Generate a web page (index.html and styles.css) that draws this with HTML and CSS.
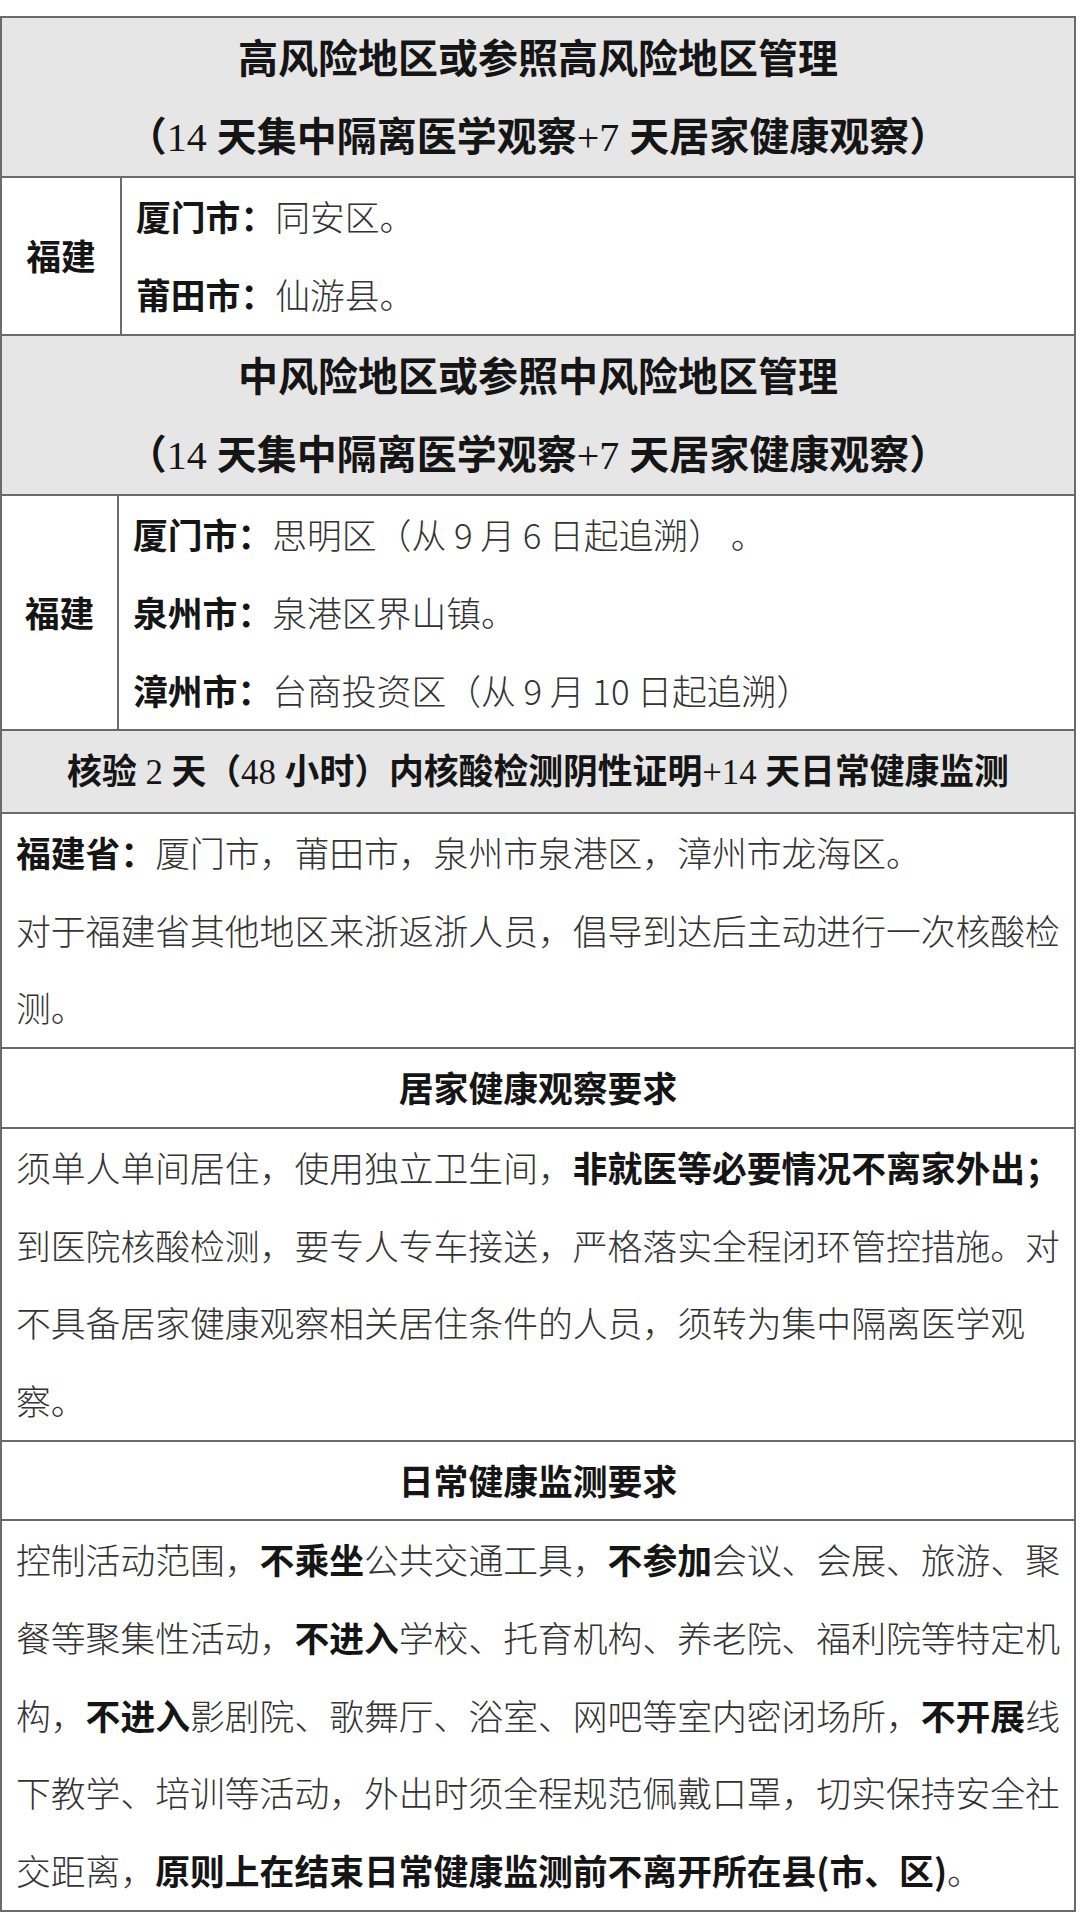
FILE: index.html
```html
<!DOCTYPE html>
<html lang="zh-CN">
<head>
<meta charset="utf-8">
<title>福建来浙返浙人员管控要求</title>
<link rel="stylesheet" href="styles.css">
</head>
<body>
<div class="sheet">
  <div class="row head grey">
    <div>高风险地区或参照高风险地区管理</div>
    <div>（<span class="num">14 </span>天集中隔离医学观察<span class="num">+7 </span>天居家健康观察）</div>
  </div>
  <div class="row region r1">
    <div class="prov">福建</div>
    <div class="cities">
      <div><b>厦门市：</b>同安区。</div>
      <div><b>莆田市：</b>仙游县。</div>
    </div>
  </div>
  <div class="row head grey">
    <div>中风险地区或参照中风险地区管理</div>
    <div>（<span class="num">14 </span>天集中隔离医学观察<span class="num">+7 </span>天居家健康观察）</div>
  </div>
  <div class="row region r2">
    <div class="prov">福建</div>
    <div class="cities">
      <div><b>厦门市：</b>思明区（从 9 月 6 日起追溯） 。</div>
      <div><b>泉州市：</b>泉港区界山镇。</div>
      <div><b>漳州市：</b>台商投资区（从 9 月 10 日起追溯）</div>
    </div>
  </div>
  <div class="row head small grey">
    <div>核验<span class="num"> 2 </span>天（<span class="num">48 </span>小时）内核酸检测阴性证明<span class="num">+14 </span>天日常健康监测</div>
  </div>
  <div class="row note">
    <div><b>福建省：</b>厦门市，莆田市，泉州市泉港区，漳州市龙海区。</div>
    <div>对于福建省其他地区来浙返浙人员，倡导到达后主动进行一次核酸检<br>测。</div>
  </div>
  <div class="row head small">
    <div>居家健康观察要求</div>
  </div>
  <div class="row note">
    <div>须单人单间居住，使用独立卫生间，<b>非就医等必要情况不离家外出；</b><br>到医院核酸检测，要专人专车接送，严格落实全程闭环管控措施。对<br>不具备居家健康观察相关居住条件的人员，须转为集中隔离医学观<br>察。</div>
  </div>
  <div class="row head small">
    <div>日常健康监测要求</div>
  </div>
  <div class="row note">
    <div>控制活动范围，<b>不乘坐</b>公共交通工具，<b>不参加</b>会议、会展、旅游、聚<br>餐等聚集性活动，<b>不进入</b>学校、托育机构、养老院、福利院等特定机<br>构，<b>不进入</b>影剧院、歌舞厅、浴室、网吧等室内密闭场所，<b>不开展</b>线<br>下教学、培训等活动，外出时须全程规范佩戴口罩，切实保持安全社<br>交距离，<b>原则上在结束日常健康监测前不离开所在县(市、区)</b>。</div>
  </div>
</div>
</body>
</html>
```
FILE: styles.css
```css
html, body {
  margin: 0;
  padding: 0;
  background: #ffffff;
}

body {
  padding-top: 16px;
  font-family: "Noto Sans CJK SC", "Noto Sans", sans-serif;
  color: #333333;
}

.sheet {
  width: 1076px;
  box-sizing: border-box;
  border: 2px solid #6a6a6a;
}

.row + .row {
  border-top: 2px solid #6a6a6a;
}

.head {
  text-align: center;
  font-weight: 700;
  color: #151515;
  font-size: 40px;
  line-height: 77.7px;
}

.head.small {
  font-size: 34.8px;
}

.grey {
  background: #e6e6e6;
}

.num {
  font-family: "Liberation Serif", serif;
  font-weight: 400;
}

.region {
  display: flex;
  font-size: 34.8px;
  line-height: 77.7px;
}

.prov {
  display: flex;
  align-items: center;
  justify-content: center;
  font-weight: 700;
  color: #151515;
  border-right: 2px solid #6a6a6a;
  box-sizing: border-box;
}

.r1 .prov {
  width: 120px;
}

.r2 .prov {
  width: 117px;
}

.cities {
  padding-left: 14px;
  font-weight: 300;
}

b {
  font-weight: 700;
  color: #151515;
}

.note {
  padding: 0 8px 0 14px;
  font-size: 34.8px;
  line-height: 77.7px;
  font-weight: 300;
  white-space: nowrap;
}
```
